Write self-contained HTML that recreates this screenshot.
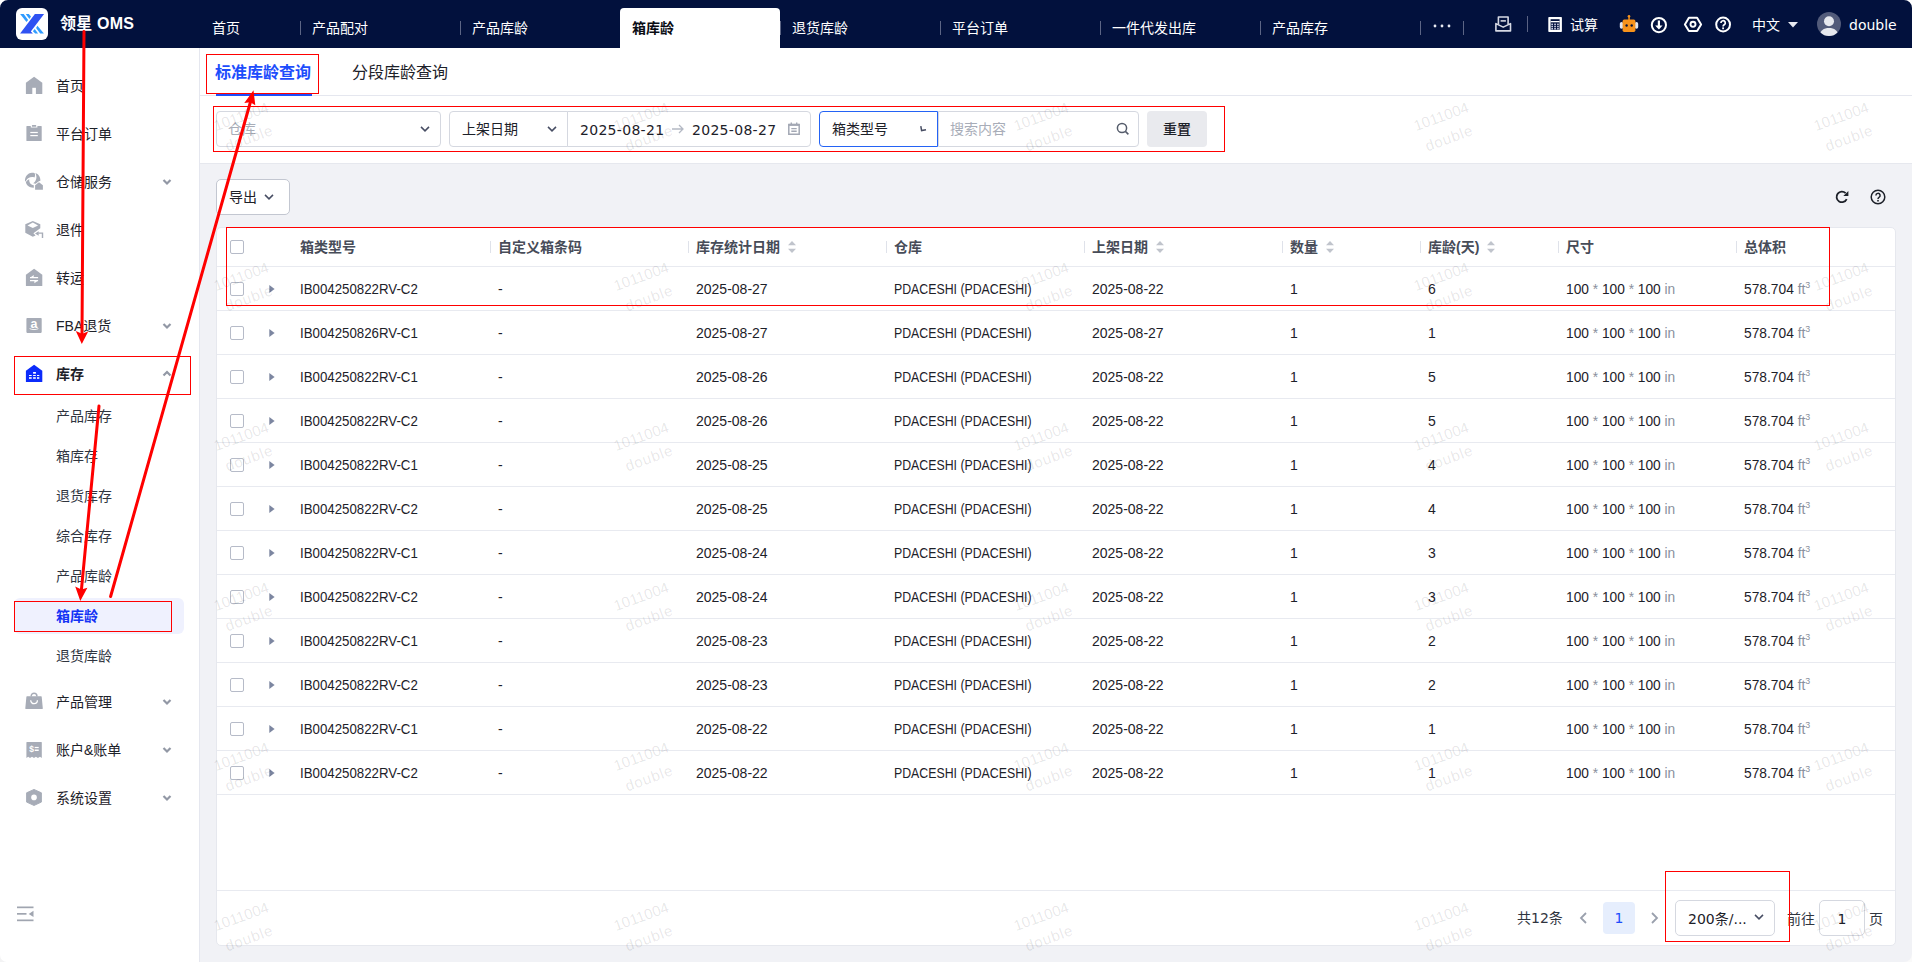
<!DOCTYPE html>
<html lang="zh-CN">
<head>
<meta charset="utf-8">
<title>领星 OMS - 箱库龄</title>
<style>
*{box-sizing:border-box;margin:0;padding:0}
html,body{width:1912px;height:962px;overflow:hidden;background:#f1f2f6}
body{position:relative;font-family:"Liberation Sans","Noto Sans CJK SC",sans-serif;font-size:14px;color:#1d2129}
.abs{position:absolute}
/* ---------- top bar ---------- */
#topbar{position:absolute;left:0;top:0;width:1912px;height:48px;background:#02113d}
#logo{position:absolute;left:16px;top:8px;width:32px;height:32px;border-radius:6px;background:#fff}
#brand{position:absolute;left:60px;top:14px;font-size:16px;font-weight:bold;color:#fff;line-height:20px;white-space:nowrap;letter-spacing:0.2px}
.ttab{position:absolute;top:8px;height:40px;width:160px;color:#fff;font-size:14px;line-height:40px;padding-left:12px;white-space:nowrap}
.ttab.first{width:100px}
.ttab.active{background:#fff;color:#0a0d14;border-radius:4px 4px 0 0;font-weight:bold}
.tsep{position:absolute;top:21px;width:1px;height:14px;background:#5c6585}
.tr{position:absolute;color:#fff;font-size:14px;white-space:nowrap}
/* ---------- sidebar ---------- */
#sidebar{position:absolute;left:0;top:48px;width:200px;height:914px;background:#fff;border-right:1px solid #e5e7ef}
.mi{position:absolute;left:0;width:199px;height:48px}
.mi .ic{position:absolute;left:26px;top:16px;width:16px;height:16px}
.mi .tx{position:absolute;left:56px;top:14px;line-height:20px;font-size:14px;color:#1d2129;white-space:nowrap}
.mi .ch{position:absolute;left:162px;top:19px;width:10px;height:10px}
.si{position:absolute;left:56px;line-height:20px;font-size:14px;color:#30353f;white-space:nowrap}
/* ---------- main ---------- */
#subtabs{position:absolute;left:200px;top:48px;width:1712px;height:48px;background:#fff;border-bottom:1px solid #e5e7ef}
#filters{position:absolute;left:200px;top:96px;width:1712px;height:68px;background:#fff;border-bottom:1px solid #e6e8ee}
.box{position:absolute;top:111px;height:36px;border:1px solid #d5d8e0;background:#fff}
#card{position:absolute;left:216px;top:227px;width:1680px;height:719px;background:#fff;border-radius:5px;border:1px solid #e6e8ee}
#cin{position:absolute;left:0;top:1px;width:1678px;height:716px}
.hl{position:absolute;left:0;width:1678px;height:1px;background:#e8eaf0}
.th{position:absolute;top:8px;line-height:20px;font-size:14px;font-weight:bold;color:#474c58;white-space:nowrap}
.thsep{position:absolute;top:12px;width:1px;height:12px;background:#dfe2ea}
.row{position:absolute;left:0;width:1678px;height:44px}
.row i{font-style:normal}
.row sup{font-size:9px;vertical-align:6px;line-height:0}
.row span{transform-origin:0 50%;position:absolute;top:12px;line-height:20px;font-size:14px;color:#1d2129;white-space:nowrap}
.cb{position:absolute;left:13px;width:14px;height:14px;border:1px solid #b6bbc8;border-radius:2px;background:#fff}
.g{color:#8a909d}
.dv{font-family:"DejaVu Sans","Liberation Sans",sans-serif}
.wm span{letter-spacing:.8px}
.wm{position:absolute;width:120px;height:46px;text-align:center;font-size:15px;line-height:23px;color:rgba(10,10,20,0.1);transform:rotate(-20deg);white-space:nowrap;pointer-events:none}
</style>
</head>
<body>
<div id="topbar">
  <div id="logo">
    <svg width="32" height="32" viewBox="0 0 32 32">
      <polygon points="18.900,6.100 28.100,6.100 14.800,23.500 16.900,25.600 4.100,25.600" fill="#2f52f2"/>
      <polygon points="4.100,6.100 7.700,6.100 12.100,12.100 10.500,14.100" fill="#2f9bff"/>
      <polygon points="9.800,6.100 12.800,6.100 15,8.600 13.400,10.900" fill="#2f9bff"/>
      <polygon points="21.400,17.800 27.900,25.600 24.200,25.600 20.100,20.100" fill="#2f9bff"/>
      <polygon points="18.700,20.900 22.100,25.600 19.200,25.600 16.900,23.300" fill="#2f9bff"/>
    </svg>
  </div>
  <div id="brand">领星 OMS</div>
  <div class="ttab first" style="left:200px">首页</div>
  <div class="tsep" style="left:300px"></div>
  <div class="ttab" style="left:300px">产品配对</div>
  <div class="tsep" style="left:460px"></div>
  <div class="ttab" style="left:460px">产品库龄</div>
  <div class="ttab active" style="left:620px">箱库龄</div>
  <div class="tsep" style="left:780px"></div>
  <div class="ttab" style="left:780px">退货库龄</div>
  <div class="tsep" style="left:940px"></div>
  <div class="ttab" style="left:940px">平台订单</div>
  <div class="tsep" style="left:1100px"></div>
  <div class="ttab" style="left:1100px">一件代发出库</div>
  <div class="tsep" style="left:1260px"></div>
  <div class="ttab" style="left:1260px">产品库存</div>
  <div class="tsep" style="left:1420px"></div>
  <svg class="abs" style="left:1433px;top:24px" width="18" height="4" viewBox="0 0 18 4"><circle cx="2" cy="2" r="1.400" fill="#e8eaf2"/><circle cx="9" cy="2" r="1.400" fill="#e8eaf2"/><circle cx="16" cy="2" r="1.400" fill="#e8eaf2"/></svg>
  <div class="tsep" style="left:1463px"></div>
  <svg class="abs" style="left:1480px;top:6px" width="260" height="36" viewBox="1480 6 260 36">
    <g fill="none" stroke="#d6d9e4" stroke-width="1.600" stroke-linejoin="round">
      <path d="M1498.400 24.500V17h9.700v7.500"/><path d="M1500.600 20.900h5.300"/>
      <path d="M1495.900 23.600l7.300 3.500 7.300-3.500v7.300h-14.600z"/>
    </g>
    <rect x="1527" y="16" width="1" height="16" fill="#5a6283"/>
    <rect x="1548.300" y="17" width="13.600" height="15" rx="0.800" fill="#fff"/>
    <rect x="1550.600" y="19.200" width="9" height="10.600" fill="#02113d"/>
    <rect x="1550.600" y="21" width="9" height="1.300" fill="#fff"/>
    <g fill="#c9cde0"><rect x="1551.300" y="23.600" width="1.700" height="1.500"/><rect x="1554.200" y="23.600" width="1.700" height="1.500"/><rect x="1557.100" y="23.600" width="1.700" height="1.500"/><rect x="1551.300" y="25.800" width="1.700" height="1.500"/><rect x="1554.200" y="25.800" width="1.700" height="1.500"/><rect x="1557.100" y="25.800" width="1.700" height="1.500"/><rect x="1551.300" y="28" width="1.700" height="1.500"/><rect x="1554.200" y="28" width="1.700" height="1.500"/><rect x="1557.100" y="28" width="1.700" height="1.500"/></g>
    <rect x="1619.800" y="22" width="3.500" height="6.800" rx="1.700" fill="#dfe3ee"/><rect x="1634.700" y="22" width="3.500" height="6.800" rx="1.700" fill="#dfe3ee"/>
    <rect x="1628.300" y="16" width="1.500" height="4.500" fill="#f7921b"/><circle cx="1629" cy="16.200" r="1.300" fill="#f7921b"/>
    <rect x="1622.600" y="19.600" width="12.800" height="12.300" rx="1.600" fill="#f7921b"/>
    <circle cx="1626.600" cy="25.500" r="1.200" fill="#02113d"/><circle cx="1631.700" cy="25.500" r="1.200" fill="#02113d"/>
    <circle cx="1658.900" cy="25.100" r="7.100" fill="none" stroke="#fff" stroke-width="2"/>
    <path d="M1658.900 20.500v6" stroke="#fff" stroke-width="2.200" fill="none"/><path d="M1655.200 25.600h7.400l-3.700 4z" fill="#fff"/>
    <path d="M1688.900 17.800h8.200l4 6.600-4 6.600h-8.200l-4-6.600z" fill="none" stroke="#fff" stroke-width="2" stroke-linejoin="round"/>
    <circle cx="1693" cy="24.300" r="2.500" fill="none" stroke="#fff" stroke-width="1.900"/>
    <circle cx="1723.100" cy="24.500" r="6.900" fill="none" stroke="#fff" stroke-width="2"/>
    <path d="M1720.900 22.900a2.200 2.200 0 1 1 3.300 1.900c-.8.500-1.100.9-1.100 1.700" stroke="#fff" stroke-width="1.700" fill="none"/><rect x="1722.200" y="27.400" width="1.800" height="1.800" fill="#fff"/>
  </svg>
  <div class="tr" style="left:1570px;top:15px;line-height:20px">试算</div>
  <div class="tr" style="left:1752px;top:15px;line-height:20px">中文</div>
  <svg class="abs" style="left:1788px;top:21.500px" width="10" height="6" viewBox="0 0 10 6"><path d="M0 0h10L5 5.5z" fill="#e8eaf2"/></svg>
  <svg class="abs" style="left:1817px;top:12px" width="24" height="24" viewBox="0 0 24 24">
    <defs><clipPath id="avc"><circle cx="12" cy="12" r="12"/></clipPath></defs>
    <circle cx="12" cy="12" r="12" fill="#525b7a"/>
    <g clip-path="url(#avc)"><circle cx="12" cy="9.3" r="5" fill="#e6e8ee"/><path d="M2.5 25c0-6 4-9 9.500-9s9.500 3 9.500 9z" fill="#e6e8ee"/></g>
  </svg>
  <div class="tr" style="left:1849px;top:14px;line-height:22px;font-size:14px;font-family:'DejaVu Sans','Liberation Sans',sans-serif">double</div>
</div>
<div id="sidebar">
<svg class="abs" style="left:20px;top:12px;pointer-events:none" width="30" height="760" viewBox="20 60 30 760">
<path d="M34.100 76.8L42.300 82.7V93.4a.5.500 0 0 1-.5.500H26.400a.5.500 0 0 1-.5-.5V82.7z" fill="#a7acb7"/><rect x="32.300" y="87.800" width="3.600" height="6.300" fill="#fff"/>
<path d="M26.900 126.100H31.900V125.500a.5.500 0 0 1 .5-.5h3.300a.5.500 0 0 1 .5.500V126.100H41.200a.5.500 0 0 1 .5.500V140.400a.5.500 0 0 1-.5.500H26.900a.5.500 0 0 1-.5-.5V126.600a.5.500 0 0 1 .5-.5z" fill="#a7acb7"/>
<path d="M30.800 126.100v1.500h6.600v-1.500h-1.200v.7h-4.300v-.7z" fill="#fff"/>
<rect x="30.300" y="131.900" width="7.500" height="1.200" fill="#fff"/><rect x="30.300" y="135" width="7.500" height="1.200" fill="#fff"/>
<g fill="#a7acb7">
<path d="M25 181.700C24.600 177 27.500 173 32 172.800C33 172.800 34 172.900 34.700 173.200C35.300 174.500 35.200 176 34.400 177.400C31 176.300 27.500 177.800 26.200 180.500Z"/>
<path d="M35.400 173.100C38.200 174 40.500 177 40.400 180.700L38.900 181.200L35.600 183.700L33.200 183.300C36.200 181.500 37.500 177.500 35.400 173.100Z"/>
<path d="M25.900 182.300C26.500 180.800 27.800 179.700 29.300 179.200C28.800 182 30.600 184.700 33.800 185.300L33.800 187.700C29.500 187.900 26.300 185.400 25.900 182.300Z"/>
<path d="M35.100 189.800V185.200L39 182.200L42.900 185.200V189.800Z"/>
</g>
<path d="M32.800 221L40.300 224.300V228.300L33.400 233.300L35.600 235.500L32.800 236.800L25.300 232.700V224.300Z" fill="#a7acb7"/>
<path d="M32.800 222.600L38.100 225.400L32.800 228L27.500 225.400Z" fill="#fff"/>
<path d="M35 233.500L38.700 231.300V235.700Z" fill="#a7acb7"/><path d="M38.400 233.100H42.500V237.900" fill="none" stroke="#a7acb7" stroke-width="1.400"/>
<path d="M34.100 268.8L42.300 274.7V285.4a.5.500 0 0 1-.5.500H26.400a.5.500 0 0 1-.5-.5V274.7z" fill="#a7acb7"/>
<path d="M30 277.600H38.100M30 280.600H38.100" stroke="#fff" stroke-width="1.300" fill="none"/><path d="M30 277.800L33.700 274.900V277.800Z" fill="#fff"/><path d="M38.100 280.400L34.400 283.200V280.400Z" fill="#fff"/>
<rect x="26.400" y="318.100" width="15.300" height="14.800" rx="0.800" fill="#a7acb7"/>
<text x="34" y="327.900" font-size="12.500" font-weight="bold" font-family="Liberation Sans,sans-serif" fill="#fff" text-anchor="middle">a</text>
<path d="M29.600 328.600c2.600 1.300 6.200 1.300 8.800 0" stroke="#fff" stroke-width="0.900" fill="none"/>
<path d="M34.100 364.8L42.300 370.7V381.4a.5.500 0 0 1-.5.500H26.400a.5.500 0 0 1-.5-.5V370.7z" fill="#0b2bfb"/>
<g fill="#fff"><rect x="33.100" y="372" width="2.800" height="1.700"/><rect x="29" y="375" width="2.700" height="1"/><rect x="33.100" y="375" width="2.700" height="1"/><rect x="37" y="375" width="2.300" height="1"/><rect x="29" y="377.200" width="2.700" height="1.600"/><rect x="33.100" y="377.200" width="2.700" height="1.600"/><rect x="37" y="377.200" width="2.300" height="1.600"/></g>
<path d="M31.200 696.500V696a2.850 2.850 0 0 1 5.700 0V696.500" fill="none" stroke="#a7acb7" stroke-width="1.500"/>
<path d="M26.900 696.300H41.200a.5.500 0 0 1 .5.400L42.800 708.300a.5.500 0 0 1-.5.600H25.800a.5.500 0 0 1-.5-.6L26.400 696.700a.5.500 0 0 1 .5-.4z" fill="#a7acb7"/>
<path d="M30.700 700.300a3.350 3.350 0 0 0 6.700 0" fill="none" stroke="#fff" stroke-width="1.300"/>
<path d="M26.900 742H41.300a.5.500 0 0 1 .5.500V757.900L40 756.700 37.900 758 35.900 756.700 34 758 32 756.700 30 758 28.200 756.700 26.400 757.900V742.500a.5.500 0 0 1 .5-.5z" fill="#a7acb7"/>
<text x="31.600" y="752" font-size="8.500" font-weight="bold" font-family="Liberation Sans,sans-serif" fill="#fff" text-anchor="middle">$</text>
<rect x="34.700" y="746.900" width="4" height="1.200" fill="#fff"/><rect x="34.700" y="749.500" width="4" height="1.500" fill="#fff"/>
<path d="M34 789L41.800 792.600V802.300L34 805.900L26.200 802.300V792.600Z" fill="#a7acb7" stroke="#a7acb7" stroke-width="1" stroke-linejoin="round" transform="translate(34 797.450) scale(.95) translate(-34 -797.450)"/>
<circle cx="34" cy="797.400" r="2.800" fill="#fff"/>
</svg>
  <div class="mi" style="top:14px"><div class="tx">首页</div></div>
  <div class="mi" style="top:62px"><div class="tx">平台订单</div></div>
  <div class="mi" style="top:110px"><div class="tx">仓储服务</div><svg class="ch" viewBox="0 0 10 10"><path d="M1.500 3L5 6.500 8.500 3" fill="none" stroke="#9298a5" stroke-width="2.200"/></svg></div>
  <div class="mi" style="top:158px"><div class="tx">退件</div></div>
  <div class="mi" style="top:206px"><div class="tx">转运</div></div>
  <div class="mi" style="top:254px"><div class="tx">FBA退货</div><svg class="ch" viewBox="0 0 10 10"><path d="M1.500 3L5 6.500 8.500 3" fill="none" stroke="#9298a5" stroke-width="2.200"/></svg></div>
  <div class="mi" style="top:302px"><div class="tx" style="font-weight:bold">库存</div><svg class="ch" viewBox="0 0 10 10"><path d="M1.500 6.500L5 3 8.500 6.500" fill="none" stroke="#9298a5" stroke-width="2.200"/></svg></div>
  <div class="mi" style="top:630px"><div class="tx">产品管理</div><svg class="ch" viewBox="0 0 10 10"><path d="M1.500 3L5 6.500 8.500 3" fill="none" stroke="#9298a5" stroke-width="2.200"/></svg></div>
  <div class="mi" style="top:678px"><div class="tx">账户&amp;账单</div><svg class="ch" viewBox="0 0 10 10"><path d="M1.500 3L5 6.500 8.500 3" fill="none" stroke="#9298a5" stroke-width="2.200"/></svg></div>
  <div class="mi" style="top:726px"><div class="tx">系统设置</div><svg class="ch" viewBox="0 0 10 10"><path d="M1.500 3L5 6.500 8.500 3" fill="none" stroke="#9298a5" stroke-width="2.200"/></svg></div>
  <div class="abs" style="left:14px;top:550px;width:170px;height:36px;background:#eff1fe;border-radius:6px"></div>
  <div class="si" style="top:358px">产品库存</div>
  <div class="si" style="top:398px">箱库存</div>
  <div class="si" style="top:438px">退货库存</div>
  <div class="si" style="top:478px">综合库存</div>
  <div class="si" style="top:518px">产品库龄</div>
  <div class="si" style="top:558px;color:#1433f5;font-weight:bold">箱库龄</div>
  <div class="si" style="top:598px">退货库龄</div>
  <svg class="abs" style="left:17px;top:857px" width="18" height="18" viewBox="0 0 18 18"><g fill="#a0a5b0"><rect x="0" y="1.500" width="16.500" height="1.700"/><rect x="0" y="8" width="9.500" height="1.700"/><rect x="0" y="14.500" width="16.500" height="1.700"/><path d="M16.500 5.800v6.200l-4.800-3.100z"/></g></svg>
</div>
<div id="subtabs">
  <div class="abs" style="left:15px;top:15px;line-height:20px;font-size:16px;font-weight:bold;color:#1d4dfc;white-space:nowrap">标准库龄查询</div>
  <div class="abs" style="left:16px;top:46px;width:96px;height:2px;background:#1d4dfc"></div>
  <div class="abs" style="left:152px;top:15px;line-height:20px;font-size:16px;color:#1d2129;white-space:nowrap">分段库龄查询</div>
</div>
<div id="filters"></div>
<div class="box" style="left:216px;width:225px;border-radius:4px"></div>
<div class="abs" style="left:228px;top:119px;line-height:20px;color:#a8adb8;white-space:nowrap">仓库</div>
<svg class="abs" style="left:420px;top:124px" width="10" height="10" viewBox="0 0 10 10"><path d="M1 2.900L5 6.900 9 2.900" fill="none" stroke="#474d63" stroke-width="1.500"/></svg>
<div class="box" style="left:449px;width:119px;border-radius:4px 0 0 4px"></div>
<div class="box" style="left:567px;width:244px;border-radius:0 4px 4px 0"></div>
<div class="abs" style="left:462px;top:119px;line-height:20px;white-space:nowrap">上架日期</div>
<svg class="abs" style="left:547px;top:124px" width="10" height="10" viewBox="0 0 10 10"><path d="M1 2.900L5 6.900 9 2.900" fill="none" stroke="#474d63" stroke-width="1.500"/></svg>
<div class="abs dv" style="left:580px;top:120px;line-height:20px;white-space:nowrap;letter-spacing:.3px">2025-08-21</div>
<svg class="abs" style="left:671px;top:123px" width="14" height="12" viewBox="0 0 14 12"><path d="M1 6h11M8 2l4 4-4 4" fill="none" stroke="#b4b9c4" stroke-width="1.300"/></svg>
<div class="abs dv" style="left:692px;top:120px;line-height:20px;white-space:nowrap;letter-spacing:.3px">2025-08-27</div>
<svg class="abs" style="left:788px;top:122px" width="12" height="13" viewBox="0 0 12 13"><path d="M0.800 2.600h10.400v9.600H0.800z" fill="none" stroke="#a3a8b4" stroke-width="1.500"/><path d="M0.800 2.900h10.400" stroke="#a3a8b4" stroke-width="2"/><path d="M3.300 0.600v2M8.700 0.600v2M3.300 6.600h5.400M3.300 9.300h5.400" stroke="#a3a8b4" stroke-width="1.400"/></svg>
<div class="box" style="left:938px;width:201px;border-radius:0 4px 4px 0"></div>
<div class="box" style="left:819px;width:119px;border-radius:4px 0 0 4px;border-color:#2463f5"></div>
<div class="abs" style="left:832px;top:119px;line-height:20px;white-space:nowrap">箱类型号</div>
<svg class="abs" style="left:918px;top:124px" width="10" height="10" viewBox="0 0 10 10"><path d="M2.800 2.200L3.600 6.600 8 5.700" fill="none" stroke="#474d63" stroke-width="1.500"/></svg>
<div class="abs" style="left:950px;top:119px;line-height:20px;color:#a8adb8;white-space:nowrap">搜索内容</div>
<svg class="abs" style="left:1116px;top:122px" width="14" height="14" viewBox="0 0 14 14"><circle cx="6" cy="6" r="4.600" fill="none" stroke="#555c6b" stroke-width="1.500"/><path d="M9.400 9.400l3 3" stroke="#555c6b" stroke-width="1.500"/></svg>
<div class="abs" style="left:1147px;top:111px;width:60px;height:36px;border-radius:4px;background:#e9eaee;text-align:center;line-height:36px;font-weight:500;color:#1d2129">重置</div>
<div class="abs" style="left:216px;top:179px;width:74px;height:36px;border:1px solid #c3c7d1;border-radius:5px;background:#fff"></div>
<div class="abs" style="left:229px;top:187px;line-height:20px;white-space:nowrap">导出</div>
<svg class="abs" style="left:264.300px;top:192px" width="10" height="10" viewBox="0 0 10 10"><path d="M1 2.900L5 6.900 9 2.900" fill="none" stroke="#474d63" stroke-width="1.500"/></svg>
<svg class="abs" style="left:1830px;top:186px" width="24" height="22" viewBox="1830 186 24 22"><path d="M1845.650 193.150A5.300 5.300 0 1 0 1846.700 199.140" fill="none" stroke="#1d2129" stroke-width="1.800"/><path d="M1848.400 190.900V196H1843.300z" fill="#1d2129"/></svg>
<svg class="abs" style="left:1870.100px;top:189.200px" width="16" height="16" viewBox="0 0 16 16" fill="none"><circle cx="8" cy="8" r="6.800" stroke="#1d2129" stroke-width="1.500"/><path d="M5.900 6.400a2.100 2.100 0 1 1 3.100 1.900c-.7.400-1 .8-1 1.600" stroke="#1d2129" stroke-width="1.500"/><rect x="7.200" y="10.900" width="1.600" height="1.600" fill="#1d2129"/></svg>
<div id="card"><div id="cin">
  <div class="cb" style="top:11px"></div>
  <div class="thsep" style="left:273px"></div>
  <div class="thsep" style="left:471px"></div>
  <div class="thsep" style="left:669px"></div>
  <div class="thsep" style="left:867px"></div>
  <div class="thsep" style="left:1065px"></div>
  <div class="thsep" style="left:1203px"></div>
  <div class="thsep" style="left:1341px"></div>
  <div class="thsep" style="left:1519px"></div>
  <div class="th" style="left:83px">箱类型号</div>
  <div class="th" style="left:281px">自定义箱条码</div>
  <div class="th" style="left:479px">库存统计日期<svg style="display:inline-block;vertical-align:-1px;margin-left:8px" width="8" height="12" viewBox="0 0 8 12"><path d="M4 0L8 4.200H0z" fill="#c0c4cc"/><path d="M4 12L8 7.800H0z" fill="#c0c4cc"/></svg></div>
  <div class="th" style="left:677px">仓库</div>
  <div class="th" style="left:875px">上架日期<svg style="display:inline-block;vertical-align:-1px;margin-left:8px" width="8" height="12" viewBox="0 0 8 12"><path d="M4 0L8 4.200H0z" fill="#c0c4cc"/><path d="M4 12L8 7.800H0z" fill="#c0c4cc"/></svg></div>
  <div class="th" style="left:1073px">数量<svg style="display:inline-block;vertical-align:-1px;margin-left:8px" width="8" height="12" viewBox="0 0 8 12"><path d="M4 0L8 4.200H0z" fill="#c0c4cc"/><path d="M4 12L8 7.800H0z" fill="#c0c4cc"/></svg></div>
  <div class="th" style="left:1211px">库龄(天)<svg style="display:inline-block;vertical-align:-1px;margin-left:8px" width="8" height="12" viewBox="0 0 8 12"><path d="M4 0L8 4.200H0z" fill="#c0c4cc"/><path d="M4 12L8 7.800H0z" fill="#c0c4cc"/></svg></div>
  <div class="th" style="left:1349px">尺寸</div>
  <div class="th" style="left:1527px">总体积</div>
  <div class="hl" style="top:37px"></div>
  <div class="row" style="top:38px"><div class="cb" style="top:15px"></div><svg class="abs" style="left:52px;top:18px" width="6" height="8" viewBox="0 0 6 8"><path d="M0.300 0L5.600 4 .3 8z" fill="#7c86a0"/></svg><span style="left:83px;transform:scaleX(.948)">IB004250822RV-C2</span><span style="left:281px">-</span><span style="left:479px">2025-08-27</span><span style="left:677px;transform:scaleX(.88)">PDACESHI (PDACESHI)</span><span style="left:875px">2025-08-22</span><span style="left:1073px">1</span><span style="left:1211px">6</span><span style="left:1349px;transform:scaleX(.981)">100 <i class="g">*</i> 100 <i class="g">*</i> 100 <i class="g">in</i></span><span style="left:1527px;transform:scaleX(.984)">578.704 <i class="g">ft<sup>3</sup></i></span></div>
  <div class="hl" style="top:81px"></div>
  <div class="row" style="top:82px"><div class="cb" style="top:15px"></div><svg class="abs" style="left:52px;top:18px" width="6" height="8" viewBox="0 0 6 8"><path d="M0.300 0L5.600 4 .3 8z" fill="#7c86a0"/></svg><span style="left:83px;transform:scaleX(.948)">IB004250826RV-C1</span><span style="left:281px">-</span><span style="left:479px">2025-08-27</span><span style="left:677px;transform:scaleX(.88)">PDACESHI (PDACESHI)</span><span style="left:875px">2025-08-27</span><span style="left:1073px">1</span><span style="left:1211px">1</span><span style="left:1349px;transform:scaleX(.981)">100 <i class="g">*</i> 100 <i class="g">*</i> 100 <i class="g">in</i></span><span style="left:1527px;transform:scaleX(.984)">578.704 <i class="g">ft<sup>3</sup></i></span></div>
  <div class="hl" style="top:125px"></div>
  <div class="row" style="top:126px"><div class="cb" style="top:15px"></div><svg class="abs" style="left:52px;top:18px" width="6" height="8" viewBox="0 0 6 8"><path d="M0.300 0L5.600 4 .3 8z" fill="#7c86a0"/></svg><span style="left:83px;transform:scaleX(.948)">IB004250822RV-C1</span><span style="left:281px">-</span><span style="left:479px">2025-08-26</span><span style="left:677px;transform:scaleX(.88)">PDACESHI (PDACESHI)</span><span style="left:875px">2025-08-22</span><span style="left:1073px">1</span><span style="left:1211px">5</span><span style="left:1349px;transform:scaleX(.981)">100 <i class="g">*</i> 100 <i class="g">*</i> 100 <i class="g">in</i></span><span style="left:1527px;transform:scaleX(.984)">578.704 <i class="g">ft<sup>3</sup></i></span></div>
  <div class="hl" style="top:169px"></div>
  <div class="row" style="top:170px"><div class="cb" style="top:15px"></div><svg class="abs" style="left:52px;top:18px" width="6" height="8" viewBox="0 0 6 8"><path d="M0.300 0L5.600 4 .3 8z" fill="#7c86a0"/></svg><span style="left:83px;transform:scaleX(.948)">IB004250822RV-C2</span><span style="left:281px">-</span><span style="left:479px">2025-08-26</span><span style="left:677px;transform:scaleX(.88)">PDACESHI (PDACESHI)</span><span style="left:875px">2025-08-22</span><span style="left:1073px">1</span><span style="left:1211px">5</span><span style="left:1349px;transform:scaleX(.981)">100 <i class="g">*</i> 100 <i class="g">*</i> 100 <i class="g">in</i></span><span style="left:1527px;transform:scaleX(.984)">578.704 <i class="g">ft<sup>3</sup></i></span></div>
  <div class="hl" style="top:213px"></div>
  <div class="row" style="top:214px"><div class="cb" style="top:15px"></div><svg class="abs" style="left:52px;top:18px" width="6" height="8" viewBox="0 0 6 8"><path d="M0.300 0L5.600 4 .3 8z" fill="#7c86a0"/></svg><span style="left:83px;transform:scaleX(.948)">IB004250822RV-C1</span><span style="left:281px">-</span><span style="left:479px">2025-08-25</span><span style="left:677px;transform:scaleX(.88)">PDACESHI (PDACESHI)</span><span style="left:875px">2025-08-22</span><span style="left:1073px">1</span><span style="left:1211px">4</span><span style="left:1349px;transform:scaleX(.981)">100 <i class="g">*</i> 100 <i class="g">*</i> 100 <i class="g">in</i></span><span style="left:1527px;transform:scaleX(.984)">578.704 <i class="g">ft<sup>3</sup></i></span></div>
  <div class="hl" style="top:257px"></div>
  <div class="row" style="top:258px"><div class="cb" style="top:15px"></div><svg class="abs" style="left:52px;top:18px" width="6" height="8" viewBox="0 0 6 8"><path d="M0.300 0L5.600 4 .3 8z" fill="#7c86a0"/></svg><span style="left:83px;transform:scaleX(.948)">IB004250822RV-C2</span><span style="left:281px">-</span><span style="left:479px">2025-08-25</span><span style="left:677px;transform:scaleX(.88)">PDACESHI (PDACESHI)</span><span style="left:875px">2025-08-22</span><span style="left:1073px">1</span><span style="left:1211px">4</span><span style="left:1349px;transform:scaleX(.981)">100 <i class="g">*</i> 100 <i class="g">*</i> 100 <i class="g">in</i></span><span style="left:1527px;transform:scaleX(.984)">578.704 <i class="g">ft<sup>3</sup></i></span></div>
  <div class="hl" style="top:301px"></div>
  <div class="row" style="top:302px"><div class="cb" style="top:15px"></div><svg class="abs" style="left:52px;top:18px" width="6" height="8" viewBox="0 0 6 8"><path d="M0.300 0L5.600 4 .3 8z" fill="#7c86a0"/></svg><span style="left:83px;transform:scaleX(.948)">IB004250822RV-C1</span><span style="left:281px">-</span><span style="left:479px">2025-08-24</span><span style="left:677px;transform:scaleX(.88)">PDACESHI (PDACESHI)</span><span style="left:875px">2025-08-22</span><span style="left:1073px">1</span><span style="left:1211px">3</span><span style="left:1349px;transform:scaleX(.981)">100 <i class="g">*</i> 100 <i class="g">*</i> 100 <i class="g">in</i></span><span style="left:1527px;transform:scaleX(.984)">578.704 <i class="g">ft<sup>3</sup></i></span></div>
  <div class="hl" style="top:345px"></div>
  <div class="row" style="top:346px"><div class="cb" style="top:15px"></div><svg class="abs" style="left:52px;top:18px" width="6" height="8" viewBox="0 0 6 8"><path d="M0.300 0L5.600 4 .3 8z" fill="#7c86a0"/></svg><span style="left:83px;transform:scaleX(.948)">IB004250822RV-C2</span><span style="left:281px">-</span><span style="left:479px">2025-08-24</span><span style="left:677px;transform:scaleX(.88)">PDACESHI (PDACESHI)</span><span style="left:875px">2025-08-22</span><span style="left:1073px">1</span><span style="left:1211px">3</span><span style="left:1349px;transform:scaleX(.981)">100 <i class="g">*</i> 100 <i class="g">*</i> 100 <i class="g">in</i></span><span style="left:1527px;transform:scaleX(.984)">578.704 <i class="g">ft<sup>3</sup></i></span></div>
  <div class="hl" style="top:389px"></div>
  <div class="row" style="top:390px"><div class="cb" style="top:15px"></div><svg class="abs" style="left:52px;top:18px" width="6" height="8" viewBox="0 0 6 8"><path d="M0.300 0L5.600 4 .3 8z" fill="#7c86a0"/></svg><span style="left:83px;transform:scaleX(.948)">IB004250822RV-C1</span><span style="left:281px">-</span><span style="left:479px">2025-08-23</span><span style="left:677px;transform:scaleX(.88)">PDACESHI (PDACESHI)</span><span style="left:875px">2025-08-22</span><span style="left:1073px">1</span><span style="left:1211px">2</span><span style="left:1349px;transform:scaleX(.981)">100 <i class="g">*</i> 100 <i class="g">*</i> 100 <i class="g">in</i></span><span style="left:1527px;transform:scaleX(.984)">578.704 <i class="g">ft<sup>3</sup></i></span></div>
  <div class="hl" style="top:433px"></div>
  <div class="row" style="top:434px"><div class="cb" style="top:15px"></div><svg class="abs" style="left:52px;top:18px" width="6" height="8" viewBox="0 0 6 8"><path d="M0.300 0L5.600 4 .3 8z" fill="#7c86a0"/></svg><span style="left:83px;transform:scaleX(.948)">IB004250822RV-C2</span><span style="left:281px">-</span><span style="left:479px">2025-08-23</span><span style="left:677px;transform:scaleX(.88)">PDACESHI (PDACESHI)</span><span style="left:875px">2025-08-22</span><span style="left:1073px">1</span><span style="left:1211px">2</span><span style="left:1349px;transform:scaleX(.981)">100 <i class="g">*</i> 100 <i class="g">*</i> 100 <i class="g">in</i></span><span style="left:1527px;transform:scaleX(.984)">578.704 <i class="g">ft<sup>3</sup></i></span></div>
  <div class="hl" style="top:477px"></div>
  <div class="row" style="top:478px"><div class="cb" style="top:15px"></div><svg class="abs" style="left:52px;top:18px" width="6" height="8" viewBox="0 0 6 8"><path d="M0.300 0L5.600 4 .3 8z" fill="#7c86a0"/></svg><span style="left:83px;transform:scaleX(.948)">IB004250822RV-C1</span><span style="left:281px">-</span><span style="left:479px">2025-08-22</span><span style="left:677px;transform:scaleX(.88)">PDACESHI (PDACESHI)</span><span style="left:875px">2025-08-22</span><span style="left:1073px">1</span><span style="left:1211px">1</span><span style="left:1349px;transform:scaleX(.981)">100 <i class="g">*</i> 100 <i class="g">*</i> 100 <i class="g">in</i></span><span style="left:1527px;transform:scaleX(.984)">578.704 <i class="g">ft<sup>3</sup></i></span></div>
  <div class="hl" style="top:521px"></div>
  <div class="row" style="top:522px"><div class="cb" style="top:15px"></div><svg class="abs" style="left:52px;top:18px" width="6" height="8" viewBox="0 0 6 8"><path d="M0.300 0L5.600 4 .3 8z" fill="#7c86a0"/></svg><span style="left:83px;transform:scaleX(.948)">IB004250822RV-C2</span><span style="left:281px">-</span><span style="left:479px">2025-08-22</span><span style="left:677px;transform:scaleX(.88)">PDACESHI (PDACESHI)</span><span style="left:875px">2025-08-22</span><span style="left:1073px">1</span><span style="left:1211px">1</span><span style="left:1349px;transform:scaleX(.981)">100 <i class="g">*</i> 100 <i class="g">*</i> 100 <i class="g">in</i></span><span style="left:1527px;transform:scaleX(.984)">578.704 <i class="g">ft<sup>3</sup></i></span></div>
  <div class="hl" style="top:565px"></div>
  <div class="hl" style="top:661px"></div>
  <div class="abs" style="left:1300px;top:679px;line-height:20px;white-space:nowrap;color:#30353f;font-family:'DejaVu Sans','Noto Sans CJK SC',sans-serif">共12条</div>
  <svg class="abs" style="left:1362px;top:683px" width="9" height="12" viewBox="0 0 9 12"><path d="M7 1L2 6l5 5" fill="none" stroke="#9aa0ad" stroke-width="1.800"/></svg>
  <div class="abs" style="left:1386px;top:673px;width:32px;height:32px;border-radius:4px;background:#e6eefd;color:#1d4dfc;text-align:center;line-height:32px;font-family:'DejaVu Sans',sans-serif">1</div>
  <svg class="abs" style="left:1433px;top:683px" width="9" height="12" viewBox="0 0 9 12"><path d="M2 1l5 5-5 5" fill="none" stroke="#9aa0ad" stroke-width="1.800"/></svg>
  <div class="abs" style="left:1458px;top:671px;width:100px;height:36px;border:1px solid #d5d8e0;border-radius:5px"></div>
  <div class="abs" style="left:1471px;top:680px;line-height:20px;white-space:nowrap;font-family:'DejaVu Sans','Noto Sans CJK SC',sans-serif">200条/...</div>
  <svg class="abs" style="left:1537px;top:683px" width="10" height="10" viewBox="0 0 10 10"><path d="M1 2.900L5 6.900 9 2.900" fill="none" stroke="#474d63" stroke-width="1.500"/></svg>
  <div class="abs" style="left:1570px;top:680px;line-height:20px;white-space:nowrap;color:#30353f">前往</div>
  <div class="abs" style="left:1602px;top:671px;width:46px;height:36px;border:1px solid #d5d8e0;border-radius:5px;text-align:center;line-height:36px;font-family:'DejaVu Sans',sans-serif">1</div>
  <div class="abs" style="left:1652px;top:680px;line-height:20px;white-space:nowrap;color:#30353f">页</div>
</div></div>
<div class="wm" style="left:185px;top:104px">1011004<br><span>double</span></div>
<div class="wm" style="left:585px;top:104px">1011004<br><span>double</span></div>
<div class="wm" style="left:985px;top:104px">1011004<br><span>double</span></div>
<div class="wm" style="left:1385px;top:104px">1011004<br><span>double</span></div>
<div class="wm" style="left:1785px;top:104px">1011004<br><span>double</span></div>
<div class="wm" style="left:185px;top:264px">1011004<br><span>double</span></div>
<div class="wm" style="left:585px;top:264px">1011004<br><span>double</span></div>
<div class="wm" style="left:985px;top:264px">1011004<br><span>double</span></div>
<div class="wm" style="left:1385px;top:264px">1011004<br><span>double</span></div>
<div class="wm" style="left:1785px;top:264px">1011004<br><span>double</span></div>
<div class="wm" style="left:185px;top:424px">1011004<br><span>double</span></div>
<div class="wm" style="left:585px;top:424px">1011004<br><span>double</span></div>
<div class="wm" style="left:985px;top:424px">1011004<br><span>double</span></div>
<div class="wm" style="left:1385px;top:424px">1011004<br><span>double</span></div>
<div class="wm" style="left:1785px;top:424px">1011004<br><span>double</span></div>
<div class="wm" style="left:185px;top:584px">1011004<br><span>double</span></div>
<div class="wm" style="left:585px;top:584px">1011004<br><span>double</span></div>
<div class="wm" style="left:985px;top:584px">1011004<br><span>double</span></div>
<div class="wm" style="left:1385px;top:584px">1011004<br><span>double</span></div>
<div class="wm" style="left:1785px;top:584px">1011004<br><span>double</span></div>
<div class="wm" style="left:185px;top:744px">1011004<br><span>double</span></div>
<div class="wm" style="left:585px;top:744px">1011004<br><span>double</span></div>
<div class="wm" style="left:985px;top:744px">1011004<br><span>double</span></div>
<div class="wm" style="left:1385px;top:744px">1011004<br><span>double</span></div>
<div class="wm" style="left:1785px;top:744px">1011004<br><span>double</span></div>
<div class="wm" style="left:185px;top:904px">1011004<br><span>double</span></div>
<div class="wm" style="left:585px;top:904px">1011004<br><span>double</span></div>
<div class="wm" style="left:985px;top:904px">1011004<br><span>double</span></div>
<div class="wm" style="left:1385px;top:904px">1011004<br><span>double</span></div>
<div class="wm" style="left:1785px;top:904px">1011004<br><span>double</span></div>
<svg class="abs" style="left:0;top:0;pointer-events:none" width="1912" height="962" viewBox="0 0 1912 962">
  <g fill="none" stroke="#ff0000" stroke-width="1">
    <rect x="206.500" y="54.500" width="112" height="39"/>
    <rect x="213.500" y="106.500" width="1011" height="45"/>
    <rect x="226.500" y="227.500" width="1603" height="78"/>
    <rect x="14.500" y="356.500" width="176" height="38"/>
    <rect x="14.500" y="601.500" width="157" height="30"/>
    <rect x="1665.500" y="871.500" width="124" height="70"/>
  </g>
  <g stroke="#ff0000" stroke-width="3" stroke-linecap="round" fill="none">
    <path d="M84 31.500L82 333"/>
    <path d="M99 406L81.500 589"/>
    <path d="M110.600 596.500L250.300 102.500"/>
  </g>
  <g fill="#ff0000">
    <path d="M81.800 344L75.800 331L82 333.800L88.200 331.500z"/>
    <path d="M80.300 601L75.200 586.500L81.400 589.500L87.400 587.700z"/>
    <path d="M253.500 90.200L255.300 105.300L250.300 102.300L244.300 103z"/>
  </g>
</svg>
<svg class="abs" style="left:0;top:0;pointer-events:none" width="1912" height="962" viewBox="0 0 1912 962">
  <path d="M0 0h8A8 8 0 0 0 0 8z" fill="#fff"/>
  <path d="M1912 0v8A8 8 0 0 0 1904 0z" fill="#fff"/>
  <path d="M0 962v-7A7 7 0 0 0 7 962z" fill="#f3f3f4"/>
  <path d="M1912 962h-8A8 8 0 0 0 1912 954z" fill="#fafafa"/>
</svg>
</body>
</html>
